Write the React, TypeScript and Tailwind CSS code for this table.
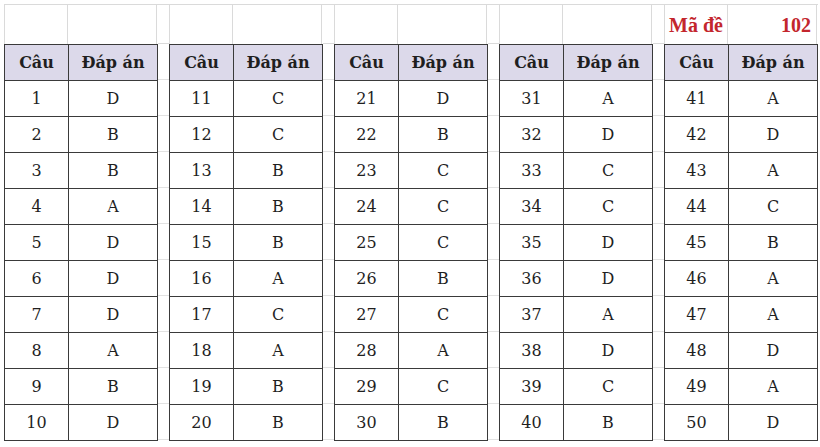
const answers = [
  "D", "B", "B", "A", "D", "D", "D", "A", "B", "D",
  "C", "C", "B", "B", "B", "A", "C", "A", "B", "B",
  "D", "B", "C", "C", "C", "B", "C", "A", "C", "B",
  "A", "D", "C", "C", "D", "D", "A", "D", "C", "B",
  "A", "D", "A", "C", "B", "A", "A", "D", "A", "D",
];

const serif = { fontFamily: '"DejaVu Serif", serif' };

function Spacer() {
  return (
    <div className="flex w-[11px] flex-col">
      <div className="h-[40px] border-y border-[#dadada]" />
      {Array.from({ length: 11 }).map((_, i) => (
        <div key={i} className="h-[36px] border-b border-[#e2e2e2]" />
      ))}
    </div>
  );
}

function AnswerTable({ group, last }: { group: number; last?: boolean }) {
  const rows = answers.slice(group * 10, group * 10 + 10);

  return (
    <div className="flex flex-col">
      <div className="flex h-[40px] border-t border-[#dadada]">
        <div className="flex w-[64px] items-center border-x border-[#dadada] pl-[4px]">
          {last && (
            <span
              className="text-[20px] font-bold text-[#c3262d]"
              style={{ fontFamily: '"Liberation Serif", serif' }}
            >
              Mã đề
            </span>
          )}
        </div>
        <div className="flex w-[89px] items-center justify-end border-r border-[#dadada] pr-[5px]">
          {last && (
            <span
              className="text-[20px] font-bold text-[#c3262d]"
              style={{ fontFamily: '"Liberation Serif", serif' }}
            >
              102
            </span>
          )}
        </div>
      </div>

      <div
        className="grid grid-cols-[64px_89px] border-l border-t border-[#3a3a3a] text-[16px] text-[#1f1f1f]"
        style={serif}
      >
        <div className="flex h-[36px] items-center justify-center border-b border-r border-[#3a3a3a] bg-[#dcd9ea] font-bold">
          Câu
        </div>
        <div className="flex h-[36px] items-center justify-center border-b border-r border-[#3a3a3a] bg-[#dcd9ea] font-bold">
          Đáp án
        </div>
        {rows.map((a, i) => (
          <div key={i} className="contents">
            <div className="flex h-[36px] items-center justify-center border-b border-r border-[#3a3a3a]">
              {group * 10 + i + 1}
            </div>
            <div className="flex h-[36px] items-center justify-center border-b border-r border-[#3a3a3a]">
              {a}
            </div>
          </div>
        ))}
      </div>
    </div>
  );
}

export default function App() {
  return (
    <div className="h-[447px] w-[820px] overflow-hidden bg-white pl-[4px] pt-[4px]">
      <div className="flex">
        <AnswerTable group={0} />
        <Spacer />
        <AnswerTable group={1} />
        <Spacer />
        <AnswerTable group={2} />
        <Spacer />
        <AnswerTable group={3} />
        <Spacer />
        <AnswerTable group={4} last />
      </div>
    </div>
  );
}
